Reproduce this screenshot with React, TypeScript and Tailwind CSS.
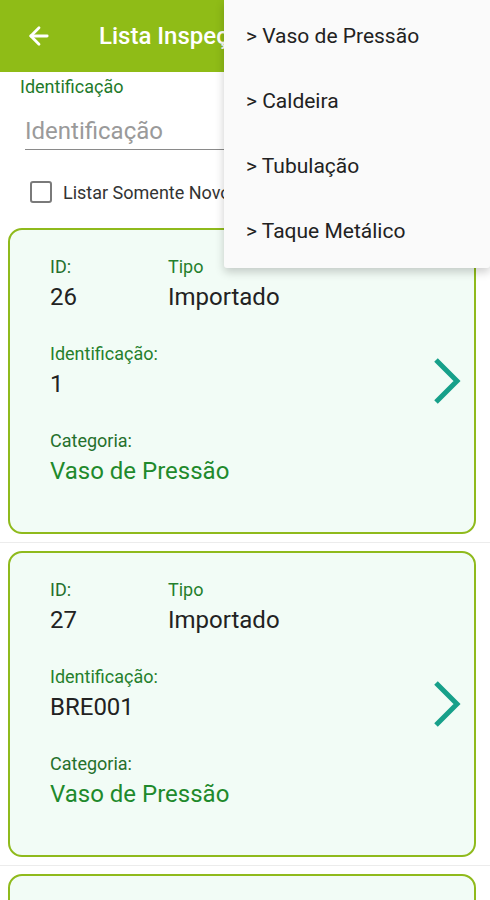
import { ArrowLeft } from "lucide-react";

type Item = { id: string; tipo: string; ident: string; categoria: string };

const items: Item[] = [
  { id: "26", tipo: "Importado", ident: "1", categoria: "Vaso de Pressão" },
  { id: "27", tipo: "Importado", ident: "BRE001", categoria: "Vaso de Pressão" },
  { id: "28", tipo: "Importado", ident: "BRE002", categoria: "Vaso de Pressão" },
];

const menu = ["> Vaso de Pressão", "> Caldeira", "> Tubulação", "> Taque Metálico"];

function Chevron() {
  return (
    <svg width="30" height="48" viewBox="0 0 30 48" fill="none">
      <polyline points="4,3 25,24 4,45" stroke="#17a08a" strokeWidth="5" />
    </svg>
  );
}

function Card({ item }: { item: Item }) {
  return (
    <div className="pl-2 pr-[14px] pt-2 pb-2 border-b border-[#ececec]">
      <div className="h-[306px] rounded-[14px] border-2 border-[#8fba1c] bg-[#f2fcf6] flex items-start">
        <div className="flex-1 pl-[40px] pt-[25px] flex flex-col gap-[27px]">
          <div className="flex">
            <div className="w-[118px]">
              <div className="text-[18px] leading-[24px] text-[#25702c]">ID:</div>
              <div className="text-[24px] leading-[36px] text-[#222]">{item.id}</div>
            </div>
            <div>
              <div className="text-[18px] leading-[24px] text-[#25802c]">Tipo</div>
              <div className="text-[24px] leading-[36px] text-[#222]">{item.tipo}</div>
            </div>
          </div>
          <div>
            <div className="text-[18px] leading-[24px] text-[#25802c]">Identificação:</div>
            <div className="text-[24px] leading-[36px] text-[#222]">{item.ident}</div>
          </div>
          <div>
            <div className="text-[18px] leading-[24px] text-[#25702c]">Categoria:</div>
            <div className="text-[24px] leading-[36px] text-[#1f8a2c]">{item.categoria}</div>
          </div>
        </div>
        <div className="self-center pr-[12px]">
          <Chevron />
        </div>
      </div>
    </div>
  );
}

export default function App() {
  return (
    <div className="relative w-[490px] h-[900px] overflow-hidden bg-white font-['Roboto',sans-serif]">
      <div className="h-[72px] bg-[#8fbc17] flex items-center">
        <ArrowLeft size={28} strokeWidth={2.4} className="text-white ml-[25px]" />
        <div className="ml-[46px] text-white text-[24px] font-medium">Lista Inspeções</div>
      </div>

      <div className="px-[20px] pt-[4px]">
        <div className="text-[18px] leading-[22px] text-[#1f7a2a]">Identificação</div>
        <div className="ml-[5px] mr-[25px] mt-[17px] border-b border-[#8a8a8a] h-[35px] text-[24px] leading-[32px] text-[#9a9a9a]">
          Identificação
        </div>
        <div className="flex items-center mt-[31px] ml-[10px] h-[22px]">
          <div className="w-[22px] h-[22px] rounded-[3px] border-2 border-[#7a7a7a]" />
          <div className="ml-[11px] text-[18px] text-[#333]">Listar Somente Novos</div>
        </div>
      </div>

      <div className="mt-[17px]">
        {items.map((it) => (
          <Card key={it.id} item={it} />
        ))}
      </div>

      <div className="absolute top-0 left-[224px] w-[266px] bg-[#fafafa] py-[4px] shadow-[0_4px_10px_rgba(0,0,0,0.2)] rounded-b-[3px]">
        {menu.map((m) => (
          <div key={m} className="h-[65px] flex items-center pl-[22px] text-[21px] text-[#222]">
            {m}
          </div>
        ))}
      </div>
    </div>
  );
}
